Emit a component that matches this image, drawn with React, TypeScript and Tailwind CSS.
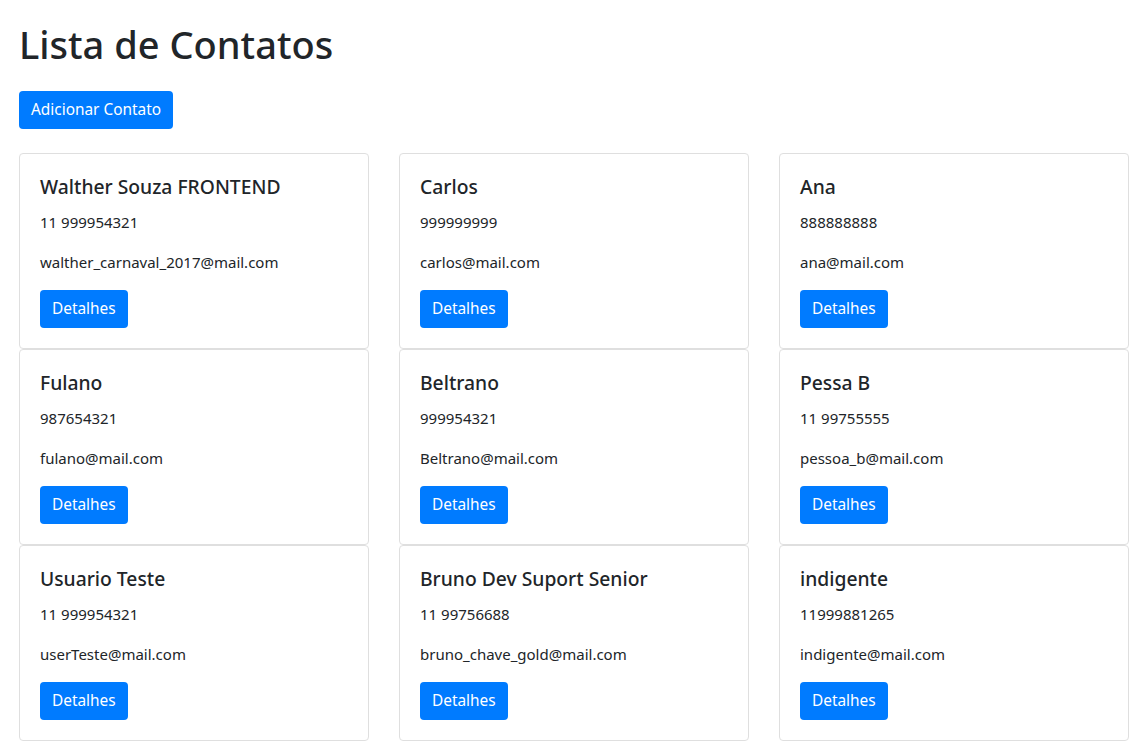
import React from 'react';

type Contact = {
  name: string;
  phone: string;
  email: string;
};

const contacts: Contact[] = [
  { name: 'Walther Souza FRONTEND', phone: '11 999954321', email: 'walther_carnaval_2017@mail.com' },
  { name: 'Carlos', phone: '999999999', email: 'carlos@mail.com' },
  { name: 'Ana', phone: '888888888', email: 'ana@mail.com' },
  { name: 'Fulano', phone: '987654321', email: 'fulano@mail.com' },
  { name: 'Beltrano', phone: '999954321', email: 'Beltrano@mail.com' },
  { name: 'Pessa B', phone: '11 99755555', email: 'pessoa_b@mail.com' },
  { name: 'Usuario Teste', phone: '11 999954321', email: 'userTeste@mail.com' },
  { name: 'Bruno Dev Suport Senior', phone: '11 99756688', email: 'bruno_chave_gold@mail.com' },
  { name: 'indigente', phone: '11999881265', email: 'indigente@mail.com' },
];

const ContactCard: React.FC<{ contact: Contact }> = ({ contact }) => (
  <div className="bg-white border border-[#dfdfdf] rounded-[4px] p-5">
    <h5 className="text-[19.3px] leading-[24px] font-medium pt-px mb-[11px]">{contact.name}</h5>
    <p className="mb-4">{contact.phone}</p>
    <p className="mb-4">{contact.email}</p>
    <button className="bg-[#007bff] text-white rounded-[4px] px-3 h-[38px] leading-[24px] text-[15.4px]">
      Detalhes
    </button>
  </div>
);

export default function App() {
  return (
    <div
      className="min-h-screen bg-white text-[#212529] text-[15px] leading-[24px] pl-[19px] pt-5"
      style={{ fontFamily: '"Noto Sans", "Open Sans", sans-serif' }}
    >
      <h1 className="text-[38px] leading-[48px] font-medium mb-[23px]">Lista de Contatos</h1>
      <button className="bg-[#007bff] text-white rounded-[4px] px-3 h-[38px] leading-[24px] text-[15.4px] mb-6">
        Adicionar Contato
      </button>
      <div className="grid grid-cols-[350px_350px_350px] gap-x-[30px]">
        {contacts.map((c) => (
          <ContactCard key={c.name} contact={c} />
        ))}
      </div>
    </div>
  );
}
